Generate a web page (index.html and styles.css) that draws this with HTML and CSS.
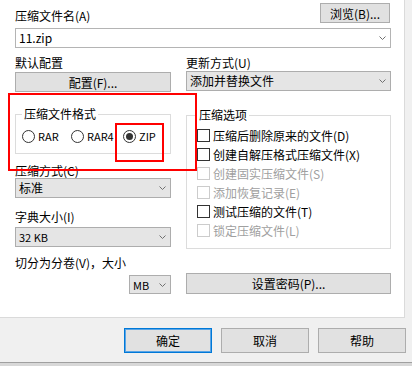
FILE: index.html
```html
<!DOCTYPE html>
<html lang="zh-CN">
<head>
    <meta charset="UTF-8">
    <meta name="viewport" content="width=device-width, initial-scale=1.0">
    <title>压缩文件名和参数</title>
    <link rel="stylesheet" href="styles.css">
</head>
<body>
    <div class="window">
        <div class="main">
            <div class="name-row">
                <div class="label name-label">压缩文件名(A)</div>
                <button class="btn btn-browse">浏览(B)...</button>
            </div>
            <div class="combo combo-edit">
                <span>11.zip</span>
                <svg class="chevron" width="7" height="4" viewBox="0 0 7 4"><polyline points="0.5,0.5 3.5,3.5 6.5,0.5" /></svg>
            </div>

            <div class="columns">
                <div class="col">
                    <div class="label">默认配置</div>
                    <button class="btn btn-profile">配置(F)...</button>

                    <fieldset class="group group-format">
                        <legend>压缩文件格式</legend>
                        <div class="radios">
                            <span class="radio radio-rar"><i class="circle"></i>RAR</span>
                            <span class="radio radio-rar4"><i class="circle"></i>RAR4</span>
                            <span class="radio"><i class="circle checked"></i>ZIP</span>
                        </div>
                    </fieldset>

                    <div class="label label-method">压缩方式(C)</div>
                    <div class="combo">
                        <span>标准</span>
                        <svg class="chevron" width="7" height="4" viewBox="0 0 7 4"><polyline points="0.5,0.5 3.5,3.5 6.5,0.5" /></svg>
                    </div>

                    <div class="label label-dict">字典大小(I)</div>
                    <div class="combo combo-dict">
                        <span class="small">32 KB</span>
                        <svg class="chevron" width="7" height="4" viewBox="0 0 7 4"><polyline points="0.5,0.5 3.5,3.5 6.5,0.5" /></svg>
                    </div>

                    <div class="label label-split">切分为分卷(V)，大小</div>
                    <div class="split-row">
                        <div class="combo combo-unit">
                            <span class="small">MB</span>
                            <svg class="chevron" width="7" height="4" viewBox="0 0 7 4"><polyline points="0.5,0.5 3.5,3.5 6.5,0.5" /></svg>
                        </div>
                    </div>
                </div>

                <div class="col">
                    <div class="label">更新方式(U)</div>
                    <div class="combo">
                        <span>添加并替换文件</span>
                        <svg class="chevron" width="7" height="4" viewBox="0 0 7 4"><polyline points="0.5,0.5 3.5,3.5 6.5,0.5" /></svg>
                    </div>

                    <fieldset class="group group-options">
                        <legend>压缩选项</legend>
                        <div class="check"><i class="box"></i>压缩后删除原来的文件(D)</div>
                        <div class="check"><i class="box"></i>创建自解压格式压缩文件(X)</div>
                        <div class="check disabled"><i class="box"></i>创建固实压缩文件(S)</div>
                        <div class="check disabled"><i class="box"></i>添加恢复记录(E)</div>
                        <div class="check"><i class="box"></i>测试压缩的文件(T)</div>
                        <div class="check disabled"><i class="box"></i>锁定压缩文件(L)</div>
                    </fieldset>

                    <button class="btn btn-password">设置密码(P)...</button>
                </div>
            </div>

            <!-- annotation boxes -->
            <div class="mark mark-format"></div>
            <div class="mark mark-zip"></div>
        </div>

        <div class="footer">
            <button class="btn btn-footer btn-default">确定</button>
            <button class="btn btn-footer">取消</button>
            <button class="btn btn-footer">帮助</button>
        </div>
        <div class="strip"></div>
    </div>
</body>
</html>
```

FILE: styles.css
```css
body {
    margin: 0;
    padding: 0;
    background-color: #f0f0f0;
    font-family: "Noto Sans CJK SC", "Noto Sans", sans-serif;
    font-size: 12px;
    color: #000;
}
.window {
    width: 412px;
    height: 366px;
    overflow: hidden;
    display: flex;
    flex-direction: column;
}
.main {
    position: relative;
    width: 405px;
    height: 318px;
    flex-shrink: 0;
    box-sizing: border-box;
    background-color: #fff;
    border-right: 1px solid #dadada;
    border-bottom: 1px solid #dadada;
    padding: 0 13px 0 15px;
}
.label {
    line-height: 16px;
    white-space: nowrap;
}
.name-row {
    display: flex;
    justify-content: space-between;
    align-items: flex-start;
    padding-right: 1px;
}
.name-label {
    margin-top: 8px;
}
.btn {
    box-sizing: border-box;
    height: 20px;
    border: 1px solid #adadad;
    background-color: #e1e1e1;
    font: inherit;
    color: #000;
    padding: 0;
    line-height: 17px;
}
.btn-browse {
    width: 70px;
    margin-top: 3px;
}
.combo {
    box-sizing: border-box;
    height: 20px;
    border: 1px solid #adadad;
    background-color: #e5e5e5;
    display: flex;
    align-items: center;
    justify-content: space-between;
    padding: 0 4px 0 3px;
    line-height: 16px;
    white-space: nowrap;
}
.combo-edit {
    margin-top: 4px;
    background-color: #fff;
    border-color: #b4b4b4;
}
.chevron {
    fill: none;
    stroke: #707070;
    stroke-width: 1;
}
.small {
    font-size: 11px;
}
.columns {
    display: grid;
    grid-template-columns: 156px 205px;
    column-gap: 15px;
    margin-top: 7px;
}
.col {
    display: flex;
    flex-direction: column;
}
.btn-profile {
    margin-top: 1px;
    width: 100%;
}
.group {
    margin: 0;
    min-width: 0;
    border: 1px solid #dcdcdc;
}
.group legend {
    line-height: 16px;
    padding: 0 2px;
}
.group-format {
    margin-top: 14px;
    padding: 8px 4px 10px 6px;
}
.radios {
    display: flex;
    align-items: center;
    height: 13px;
    line-height: 13px;
    font-size: 11px;
}
.radio {
    display: flex;
    align-items: center;
    gap: 3px;
    white-space: nowrap;
}
.radio-rar {
    width: 49px;
}
.radio-rar4 {
    width: 52px;
}
.circle {
    box-sizing: border-box;
    width: 13px;
    height: 13px;
    border: 1px solid #333;
    border-radius: 50%;
    background-color: #fff;
    display: flex;
    align-items: center;
    justify-content: center;
}
.circle.checked::after {
    content: "";
    width: 7px;
    height: 7px;
    border-radius: 50%;
    background-color: #333;
}
.label-method {
    margin-top: 9px;
    line-height: 15px;
}
.label-dict {
    margin-top: 11px;
}
.combo-dict {
    margin-top: 2px;
}
.label-split {
    margin-top: 8px;
}
.split-row {
    display: flex;
    justify-content: flex-end;
    margin-top: 4px;
}
.combo-unit {
    width: 42px;
    height: 19px;
}
.group-options {
    margin-top: 16px;
    padding: 3px 4px 8px 10px;
}
.check {
    display: flex;
    align-items: center;
    gap: 3px;
    height: 19px;
    white-space: nowrap;
}
.box {
    box-sizing: border-box;
    width: 13px;
    height: 13px;
    border: 1px solid #333;
    background-color: #fff;
}
.check.disabled {
    color: #a0a0a0;
}
.check.disabled .box {
    border-color: #cccccc;
}
.btn-password {
    margin-top: 24px;
    width: 100%;
    height: 21px;
}
.mark {
    position: absolute;
    box-sizing: border-box;
    border: 2px solid #ff0000;
}
.mark-format {
    left: 8px;
    top: 93px;
    width: 189px;
    height: 78px;
}
.mark-zip {
    left: 115px;
    top: 123px;
    width: 49px;
    height: 39px;
}
.footer {
    height: 45px;
    flex-shrink: 0;
    box-sizing: border-box;
    display: flex;
    justify-content: flex-end;
    align-items: flex-start;
    gap: 9px;
    padding: 10px 6px 0 0;
    border-bottom: 1px solid #a0a0a0;
}
.btn-footer {
    width: 88px;
    height: 25px;
    line-height: 22px;
}
.btn-default {
    border-color: #0078d7;
    box-shadow: inset 0 0 0 1px #5aa5e6;
}
.strip {
    flex: 1;
    background-color: #d8d8d8;
}
```
